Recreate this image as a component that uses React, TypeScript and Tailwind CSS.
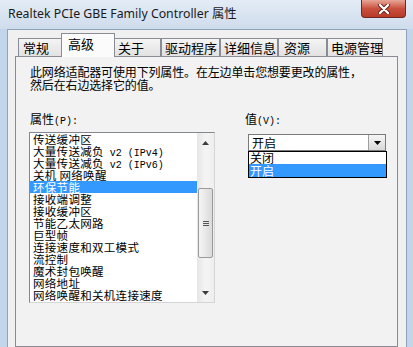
import React from 'react';

const cjk = "font-['Noto_Sans_CJK_SC','Noto_Sans_CJK_JP',sans-serif]";
const mono = "font-['Liberation_Mono','Noto_Sans_CJK_SC',monospace] text-[10px]";

const tabs = [
  { label: '常规', w: 'w-[45px] pl-[4px]' },
  { label: '高级', w: 'w-[54px] pl-[6px]', active: true },
  { label: '关于', w: 'w-[48px] pl-[4px]' },
  { label: '驱动程序', w: 'w-[59px] pl-[3px]' },
  { label: '详细信息', w: 'w-[58px] pl-[3px]' },
  { label: '资源', w: 'w-[49px] pl-[5px]' },
  { label: '电源管理', w: 'w-[56px] pl-[3px]' },
];

// list rows; latin parts are drawn half-width like the system font
const rows: { cjk: string; latin?: string; selected?: boolean }[] = [
  { cjk: '传送缓冲区' },
  { cjk: '大量传送减负', latin: ' v2 (IPv4)' },
  { cjk: '大量传送减负', latin: ' v2 (IPv6)' },
  { cjk: '关机 网络唤醒' },
  { cjk: '环保节能', selected: true },
  { cjk: '接收端调整' },
  { cjk: '接收缓冲区' },
  { cjk: '节能乙太网路' },
  { cjk: '巨型帧' },
  { cjk: '连接速度和双工模式' },
  { cjk: '流控制' },
  { cjk: '魔术封包唤醒' },
  { cjk: '网络地址' },
  { cjk: '网络唤醒和关机连接速度' },
];

function Tri({ up }: { up?: boolean }) {
  return (
    <svg width="7" height="4" viewBox="0 0 7 4">
      {up ? <path d="M0 4 L3.5 0 L7 4 Z" fill="#3c3c3c" /> : <path d="M0 0 L7 0 L3.5 4 Z" fill="#3c3c3c" />}
    </svg>
  );
}

export default function App() {
  return (
    <div className={`w-[413px] h-[347px] overflow-hidden bg-[#c3d5ea] flex flex-col text-black ${cjk}`}>

      {/* ── TITLE BAR ─────────────────────────────── */}
      <div className="h-[29px] shrink-0 flex items-start justify-between bg-gradient-to-b from-[#e3ecf6] to-[#cfdcec]">
        <span className="pl-[8px] pt-[5px] text-[12.3px] leading-[18px] font-['Noto_Sans','Noto_Sans_CJK_SC',sans-serif] text-[#1a1a1a]">
          Realtek PCIe GBE Family Controller 属性
        </span>
        <div className="mr-[7px] w-[45px] h-[18px] rounded-b-[4px] border border-t-0 border-[#6e2a22] bg-gradient-to-b from-[#e7a597] via-[#c9503e] to-[#b8392a] flex items-center justify-center">
          <svg width="12" height="10" viewBox="0 0 12 10">
            <path d="M2 1 L10 9 M10 1 L2 9" stroke="#5a1a12" strokeWidth="4" strokeLinecap="round" />
            <path d="M2 1 L10 9 M10 1 L2 9" stroke="#ffffff" strokeWidth="2.4" strokeLinecap="round" />
          </svg>
        </div>
      </div>

      {/* ── CLIENT AREA ───────────────────────────── */}
      <div className="flex-1 ml-[7px] mr-[6px] bg-[#f0f0f0] border-l border-t border-r border-[#8fa2ba] pl-[7px] pr-[8px] pt-[3px] flex flex-col text-[12px]">

        {/* tabs */}
        <div className="h-[23px] shrink-0 flex items-end pl-[3px]">
          {tabs.map(t =>
            t.active ? (
              <div key={t.label}
                className={`${t.w} shrink-0 whitespace-nowrap -mx-[2px] h-[24px] -mb-[1px] relative z-10 border border-b-0 border-[#898c95] bg-[#fbfbfb] pt-[1px] text-[13px] leading-[17px]`}>
                {t.label}
              </div>
            ) : (
              <div key={t.label}
                className={`${t.w} shrink-0 whitespace-nowrap overflow-hidden h-[18px] border border-b-0 border-[#898c95] bg-gradient-to-b from-[#f4f4f4] to-[#e2e2e2] text-[13px] leading-[17px]`}>
                {t.label}
              </div>
            )
          )}
        </div>

        {/* tab page */}
        <div className="flex-1 border border-[#898c95] bg-[#f2f2f2] pl-[13px] pt-[8px]">
          <div className="pl-[1px] leading-[13px] tracking-[-0.15px]">
            <div>此网络适配器可使用下列属性。在左边单击您想要更改的属性，</div>
            <div>然后在右边选择它的值。</div>
          </div>

          <div className="flex mt-[21px]">
            {/* property list */}
            <div className="w-[186px]">
              <div className="pl-[1px] leading-[13px]">属性<span className={mono}>(P):</span></div>
              <div className="mt-[4px] h-[171px] border border-[#828790] border-r-[#d5d5d5] border-b-[#d5d5d5] bg-white flex">
                <div className="flex-1 overflow-hidden text-[11.5px]">
                  {rows.map(r => (
                    <div key={r.cjk + (r.latin ?? '')}
                      className={`h-[12px] leading-[12px] pl-[3px] whitespace-nowrap tracking-[0.3px] ${r.selected ? 'bg-[#3399ff] text-white' : ''}`}>
                      {r.cjk}{r.latin && <span className={`${mono} tracking-normal`}>{r.latin.replace(/ /g, '\u00a0')}</span>}
                    </div>
                  ))}
                </div>
                {/* scrollbar */}
                <div className="w-[17px] flex flex-col bg-gradient-to-r from-[#e6e6e6] via-[#f4f4f4] to-[#eeeeee]">
                  <div className="h-[17px] flex items-center justify-center pt-[3px]"><Tri up /></div>
                  <div className="mt-[38px] mx-[1px] h-[70px] rounded-[2px] border border-[#9a9a9a] bg-gradient-to-r from-[#f5f5f5] to-[#dadada] flex flex-col items-center justify-center gap-[1px]">
                    <div className="w-[6px] h-[1px] bg-[#555]" />
                    <div className="w-[6px] h-[1px] bg-[#555]" />
                    <div className="w-[6px] h-[1px] bg-[#555]" />
                  </div>
                  <div className="flex-1" />
                  <div className="h-[17px] flex items-center justify-center pb-[2px]"><Tri /></div>
                </div>
              </div>
            </div>

            {/* value */}
            <div className="ml-[30px]">
              <div className="leading-[13px]">值<span className={mono}>(V):</span></div>
              <div className="relative mt-[6px] ml-[3px] w-[138px]">
                <div className="h-[17px] border border-[#7a7a7a] bg-white flex">
                  <div className="flex-1 pl-[3px] leading-[15px]">开启</div>
                  <div className="w-[17px] border-l border-[#a0a0a0] bg-gradient-to-b from-[#f6f6f6] to-[#d8d8d8] flex items-center justify-center">
                    <svg width="7" height="4" viewBox="0 0 7 4"><path d="M0 0 L7 0 L3.5 4 Z" fill="#000" /></svg>
                  </div>
                </div>
                {/* open dropdown */}
                <div className="absolute left-0 top-full w-[139px] border border-black bg-white z-20">
                  <div className="h-[12px] leading-[12px] pl-[1px]">关闭</div>
                  <div className="h-[13px] leading-[13px] pl-[1px] bg-[#3399ff] text-white">开启</div>
                </div>
              </div>
            </div>
          </div>
        </div>
      </div>
    </div>
  );
}
